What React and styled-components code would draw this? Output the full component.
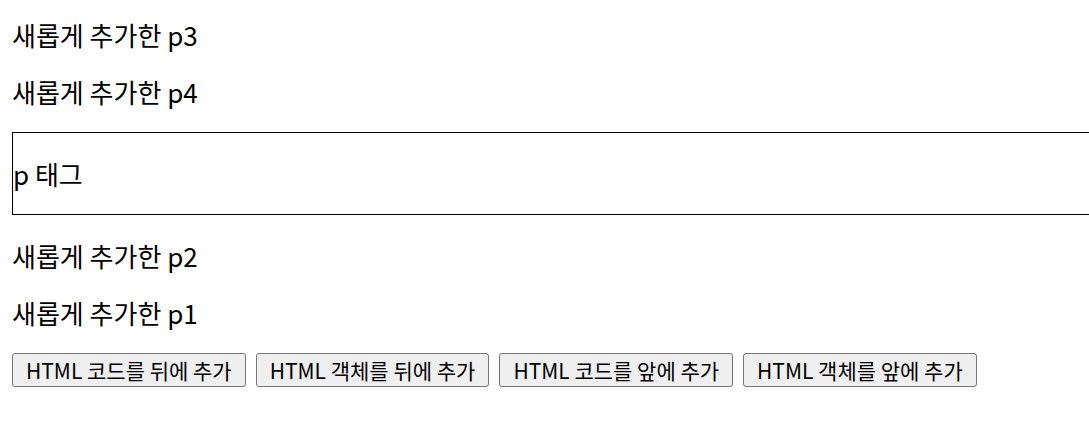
import React from 'react'
import styled, { createGlobalStyle } from 'styled-components'

const GlobalStyle = createGlobalStyle`
	html, body {
		margin: 0;
		padding: 0;
		overflow: hidden;
		background: #fff;
	}
	body {
		font-family: "Noto Sans CJK KR", "Noto Sans", sans-serif;
		font-size: 26px;
		color: #000;
	}
`

const Page = styled.div`
	padding: 18px 12px 0;
	display: flow-root;
`

const Text = styled.p`
	margin: 24px 0;
	line-height: 33px;
`

const Lead = styled(Text)`
	margin-top: 0;
`

const Box = styled.div`
	border: 1px solid #000;
	margin-right: -60px;
`

const ButtonRow = styled.div`
	display: flex;
	gap: 10px;
`

const Button = styled.button`
	height: 34px;
	padding: 0 13px;
	font-family: inherit;
	font-size: 21px;
	line-height: 32px;
	color: #000;
	background: #efefef;
	border: 1px solid #767676;
	border-radius: 3px;
	white-space: nowrap;
`

const buttons = [
	'HTML 코드를 뒤에 추가',
	'HTML 객체를 뒤에 추가',
	'HTML 코드를 앞에 추가',
	'HTML 객체를 앞에 추가',
]

const App = () => {
	return (
		<>
			<GlobalStyle />
			<Page>
				<Lead>새롭게 추가한 p3</Lead>
				<Text>새롭게 추가한 p4</Text>
				<Box>
					<Text>p 태그</Text>
				</Box>
				<Text>새롭게 추가한 p2</Text>
				<Text>새롭게 추가한 p1</Text>
				<ButtonRow>
					{buttons.map((label) => (
						<Button key={label}>{label}</Button>
					))}
				</ButtonRow>
			</Page>
		</>
	)
}

export default App
